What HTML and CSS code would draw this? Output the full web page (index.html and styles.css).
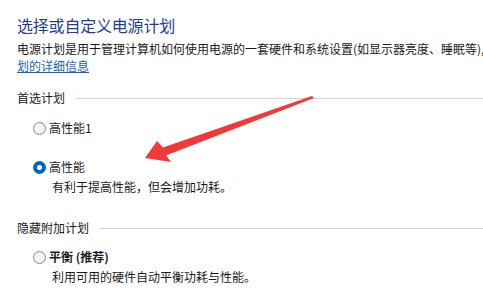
FILE: index.html
```html
<!DOCTYPE html>
<html>
<head>
    <title>电源选项</title>
    <meta charset="utf-8">
    <link rel="stylesheet" href="styles.css">
</head>
<body>
    <div class="page">
        <h1 class="title">选择或自定义电源计划</h1>
        <p class="intro">电源计划是用于管理计算机如何使用电源的一套硬件和系统设置(如显示器亮度、睡眠等),</p>
        <a class="more" href="#">划的详细信息</a>

        <!-- Preferred plans -->
        <div class="group-head group-first">
            <span>首选计划</span>
            <div class="rule"></div>
        </div>
        <div class="plan plan-first">
            <span class="radio"></span>
            <span class="plan-name">高性能1</span>
        </div>
        <div class="plan plan-gap">
            <span class="radio checked"></span>
            <span class="plan-name">高性能</span>
        </div>
        <div class="plan-desc">有利于提高性能，但会增加功耗。</div>

        <!-- Hidden plans -->
        <div class="group-head group-second">
            <span>隐藏附加计划</span>
            <div class="rule"></div>
        </div>
        <div class="plan plan-third">
            <span class="radio"></span>
            <span class="plan-name bold">平衡 (推荐)</span>
        </div>
        <div class="plan-desc">利用可用的硬件自动平衡功耗与性能。</div>
    </div>

    <svg class="arrow" width="483" height="295" viewBox="0 0 483 295">
        <polygon fill="#f03a3a" points="145,158 157,141 163,147.5 312,96 314,98 166,155.5 171,162"/>
    </svg>
</body>
</html>
```

FILE: styles.css
```css
html, body {
    margin: 0;
    height: 100%;
    overflow: hidden;
    background: #fff;
}

body {
    font-family: "Noto Sans CJK SC", "Noto Sans", sans-serif;
    font-size: 12px;
    color: #1a1a1a;
    position: relative;
}

.page {
    padding: 14px 0 0 17px;
}

.title {
    margin: 0;
    font-size: 16px;
    font-weight: normal;
    line-height: 22px;
    color: #1e3c96;
    letter-spacing: -0.2px;
}

.intro {
    margin: 5px 0 0 0;
    line-height: 16px;
    white-space: nowrap;
}

.more {
    display: inline-block;
    line-height: 16px;
    color: #1a64b4;
    text-decoration: underline;
}

.group-head {
    display: flex;
    align-items: center;
    line-height: 16px;
}

.group-first {
    margin-top: 16px;
}

.group-second {
    margin-top: 24px;
}

.rule {
    flex: 1;
    height: 1px;
    background: #d4d4d4;
    margin-left: 10px;
}

.plan {
    display: flex;
    align-items: center;
    margin-left: 16px;
    line-height: 18px;
}

.plan-first {
    margin-top: 13px;
}

.plan-gap {
    margin-top: 21px;
}

.plan-third {
    margin-top: 12px;
}

.radio {
    width: 11px;
    height: 11px;
    border: 1px solid #8a8a8a;
    border-radius: 50%;
    background: #f4f4f4;
    margin-right: 3px;
    box-sizing: content-box;
}

.radio.checked {
    width: 5px;
    height: 5px;
    border: 4px solid #0067c0;
    background: #fff;
}

.bold {
    font-weight: bold;
}

.plan-desc {
    margin: 2px 0 0 35px;
    line-height: 18px;
}

.arrow {
    position: absolute;
    left: 0;
    top: 0;
    pointer-events: none;
}
```
